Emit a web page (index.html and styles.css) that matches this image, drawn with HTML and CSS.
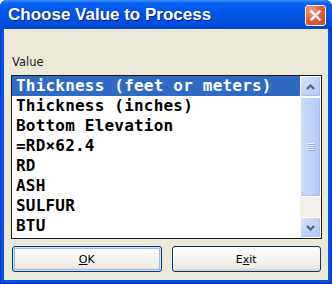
FILE: index.html
```html
<!DOCTYPE html>
<html>
<head>
<meta charset="utf-8">
<title>Choose Value to Process</title>
<link rel="stylesheet" href="styles.css">
</head>
<body>

<div class="window">
	<!-- title bar -->
	<div class="titlebar">
		<span class="title">Choose Value to Process</span>
		<span class="close">
			<svg width="11" height="11" viewBox="0 0 11 11">
				<path d="M1.5 1.5 L9.5 9.5 M9.5 1.5 L1.5 9.5" stroke="#fff" stroke-width="2.4" stroke-linecap="square"/>
			</svg>
		</span>
	</div>

	<div class="client">
		<div class="label">Value</div>

		<div class="listbox">
			<ul class="items">
				<li class="sel">Thickness (feet or meters)</li>
				<li>Thickness (inches)</li>
				<li>Bottom Elevation</li>
				<li>=RD×62.4</li>
				<li>RD</li>
				<li>ASH</li>
				<li>SULFUR</li>
				<li>BTU</li>
			</ul>
			<div class="vscroll">
				<div class="sbtn">
					<svg width="9" height="6" viewBox="0 0 9 6"><path d="M1 5 L4.5 1.5 L8 5" fill="none" stroke="#4d6185" stroke-width="2"/></svg>
				</div>
				<div class="thumb">
					<svg width="8" height="8" viewBox="0 0 8 8">
						<path d="M0 0.5 H7 M0 2.5 H7 M0 4.5 H7 M0 6.5 H7" stroke="#eef4fe" stroke-width="1"/>
						<path d="M1 1.5 H8 M1 3.5 H8 M1 5.5 H8 M1 7.5 H8" stroke="#8cb0f8" stroke-width="1"/>
					</svg>
				</div>
				<div class="track"></div>
				<div class="sbtn">
					<svg width="9" height="6" viewBox="0 0 9 6"><path d="M1 1 L4.5 4.5 L8 1" fill="none" stroke="#4d6185" stroke-width="2"/></svg>
				</div>
			</div>
		</div>

		<div class="buttons">
			<button class="btn default"><u>O</u>K</button>
			<button class="btn">E<u>x</u>it</button>
		</div>
	</div>
</div>

</body>
</html>
```

FILE: styles.css
```css
	html,body{margin:0;padding:0;background:#fff;}

	.window {
		width: 332px;
		height: 284px;
		display: flex;
		flex-direction: column;
		background: #0054e3;
		border-radius: 7px 7px 0 0;
		box-shadow: inset 1px 0 #0831d9, inset -1px 0 #001ea0, inset 0 -1px #001ea0;
	}

	/* title bar */
	.titlebar {
		height: 29px;
		flex: none;
		display: flex;
		align-items: center;
		justify-content: space-between;
		padding: 0 6px 0 8px;
		border-radius: 7px 7px 0 0;
		background: linear-gradient(#3d95ff 0, #0a62f2 3px, #0058ee 8px, #0055e5 50%, #004fdc 85%, #0043c6 100%);
	}
	.title {
		font-family: "Liberation Sans", Arial, sans-serif;
		font-weight: bold;
		font-size: 17px;
		color: #fff;
		text-shadow: 1px 1px #0a1e8c;
		margin-top: 1px;
	}
	.close {
		width: 19px;
		height: 19px;
		display: flex;
		align-items: center;
		justify-content: center;
		border: 1px solid #fff;
		border-radius: 3px;
		background: radial-gradient(circle at 30% 25%, #f3a58b 0, #e5613d 45%, #c9401f 100%);
		margin-top: 1px;
	}

	/* client area */
	.client {
		flex: 1;
		margin: 0 4px 4px 4px;
		background: #ece9d8;
		padding: 27px 6px 0 7px;
		display: flex;
		flex-direction: column;
	}
	.label {
		font-family: "DejaVu Sans", Tahoma, sans-serif;
		font-size: 11.5px;
		line-height: 13px;
		color: #222;
		padding-left: 1px;
	}

	.listbox {
		margin-top: 6px;
		height: 162px;
		display: flex;
		border: 1px solid #1a1a1a;
		background: #fff;
	}
	.items {
		flex: 1;
		list-style: none;
		margin: 0;
		padding: 0;
		font-family: "DejaVu Sans Mono", "Liberation Mono", monospace;
		font-weight: bold;
		font-size: 16px;
		letter-spacing: 0.2px;
		color: #000;
	}
	.items li {
		height: 20px;
		line-height: 20px;
		padding-left: 4px;
		white-space: nowrap;
	}
	.items li.sel {
		background: #316ac5;
		color: #fff;
	}

	/* scroll bar */
	.vscroll {
		width: 21px;
		display: flex;
		flex-direction: column;
		background: #f5f4ea;
	}
	.sbtn {
		height: 21px;
		flex: none;
		display: flex;
		align-items: center;
		justify-content: center;
		box-sizing: border-box;
		border: 1px solid #fff;
		border-radius: 2px;
		background: linear-gradient(135deg, #dbe5fd 0, #c1d3fb 50%, #b4c8f6 100%);
		box-shadow: inset -1px -1px #a8bef0;
	}
	.thumb {
		height: 100px;
		flex: none;
		display: flex;
		align-items: center;
		justify-content: center;
		box-sizing: border-box;
		border: 1px solid #fff;
		border-radius: 2px;
		background: linear-gradient(90deg, #c9d8fc 0, #c1d3fb 50%, #b6caf7 100%);
		box-shadow: inset -1px -1px #a8bef0;
	}
	.track {
		flex: 1;
		background: #f3f1e9;
	}

	/* buttons */
	.buttons {
		margin-top: 7px;
		display: flex;
		gap: 10px;
		padding: 0 1px;
	}
	.btn {
		flex: 1;
		height: 26px;
		font-family: "DejaVu Sans", Tahoma, sans-serif;
		font-size: 11px;
		color: #000;
		border: 1px solid #003c74;
		border-radius: 3px;
		background: linear-gradient(#ffffff 0, #f6f5f0 40%, #ecebe6 85%, #d6d0c5 100%);
		padding: 0;
	}
	.btn.default {
		box-shadow: inset 0 0 0 1px #cee7ff, inset 0 0 0 2px #9db9eb;
	}
```
